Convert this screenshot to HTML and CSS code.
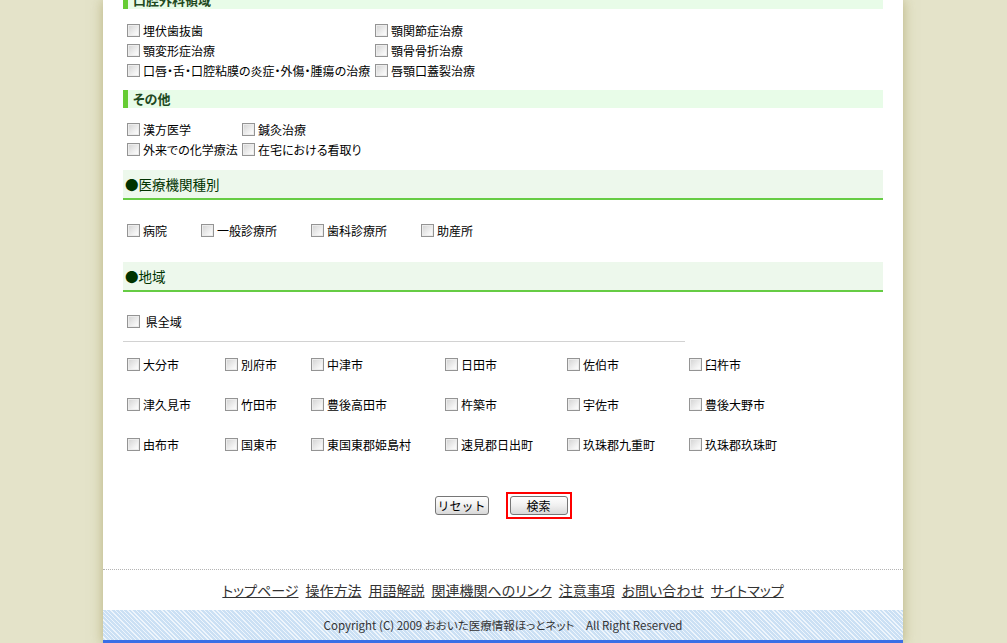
FILE: index.html
```html
<!DOCTYPE html>
<html lang="ja">

<head>
    <meta charset="UTF-8">
    <title>医療機関検索</title>
    <link rel="stylesheet" href="styles.css">
</head>

<body>
    <div class="page">
        <form class="content" id="searchForm">
            <h4 class="sub-title first">口腔外科領域</h4>
            <div class="check-grid oral">
                <label class="check"><input type="checkbox">埋伏歯抜歯</label>
                <label class="check"><input type="checkbox">顎関節症治療</label>
                <label class="check"><input type="checkbox">顎変形症治療</label>
                <label class="check"><input type="checkbox">顎骨骨折治療</label>
                <label class="check"><input type="checkbox">口唇・舌・口腔粘膜の炎症・外傷・腫瘍の治療</label>
                <label class="check"><input type="checkbox">唇顎口蓋裂治療</label>
            </div>

            <h4 class="sub-title other-title">その他</h4>
            <div class="check-grid other">
                <label class="check"><input type="checkbox">漢方医学</label>
                <label class="check"><input type="checkbox">鍼灸治療</label>
                <label class="check"><input type="checkbox">外来での化学療法</label>
                <label class="check"><input type="checkbox">在宅における看取り</label>
            </div>

            <h3 class="section-title">●医療機関種別</h3>
            <div class="check-grid types">
                <label class="check"><input type="checkbox">病院</label>
                <label class="check"><input type="checkbox">一般診療所</label>
                <label class="check"><input type="checkbox">歯科診療所</label>
                <label class="check"><input type="checkbox">助産所</label>
            </div>

            <h3 class="section-title area-title">●地域</h3>
            <div class="all-area">
                <label class="check"><input type="checkbox">&nbsp;県全域</label>
            </div>
            <hr class="area-line">

            <div class="check-grid cities">
                <label class="check"><input type="checkbox">大分市</label>
                <label class="check"><input type="checkbox">別府市</label>
                <label class="check"><input type="checkbox">中津市</label>
                <label class="check"><input type="checkbox">日田市</label>
                <label class="check"><input type="checkbox">佐伯市</label>
                <label class="check"><input type="checkbox">臼杵市</label>

                <label class="check"><input type="checkbox">津久見市</label>
                <label class="check"><input type="checkbox">竹田市</label>
                <label class="check"><input type="checkbox">豊後高田市</label>
                <label class="check"><input type="checkbox">杵築市</label>
                <label class="check"><input type="checkbox">宇佐市</label>
                <label class="check"><input type="checkbox">豊後大野市</label>

                <label class="check"><input type="checkbox">由布市</label>
                <label class="check"><input type="checkbox">国東市</label>
                <label class="check"><input type="checkbox">東国東郡姫島村</label>
                <label class="check"><input type="checkbox">速見郡日出町</label>
                <label class="check"><input type="checkbox">玖珠郡九重町</label>
                <label class="check"><input type="checkbox">玖珠郡玖珠町</label>
            </div>

            <div class="buttons">
                <button type="reset" class="btn btn-reset">リセット</button>
                <span class="search-frame">
                    <button type="submit" class="btn btn-search">検索</button>
                </span>
            </div>
        </form>

        <div class="footer">
            <ul class="footer-links">
                <li><a href="#">トップページ</a></li>
                <li><a href="#">操作方法</a></li>
                <li><a href="#">用語解説</a></li>
                <li><a href="#">関連機関へのリンク</a></li>
                <li><a href="#">注意事項</a></li>
                <li><a href="#">お問い合わせ</a></li>
                <li><a href="#">サイトマップ</a></li>
            </ul>
            <div class="copyright">Copyright (C) 2009 おおいた医療情報ほっとネット　All Right Reserved</div>
        </div>
    </div>
</body>

</html>
```

FILE: styles.css
```css
body {
    margin: 0;
    padding-right: 1px;
    background-color: #e4e3c9;
    font-family: "Noto Sans CJK JP", sans-serif;
    font-size: 12px;
    color: #000;
    font-feature-settings: "palt";
}

.page {
    width: 800px;
    margin: 0 auto;
    background-color: #fff;
    box-shadow: 0 0 12px rgba(150, 140, 70, 0.55);
}

.content {
    display: flow-root;
    padding: 0 20px 50px;
}

/* 小見出し (口腔外科領域 / その他) */
.sub-title {
    height: 18px;
    margin: 10px 0 0;
    padding-left: 5px;
    line-height: 18px;
    border-left: 5px solid #66cc33;
    background-color: #e8fce8;
    color: #1f4a1f;
    font-size: 13px;
    font-weight: bold;
}

.sub-title.first {
    margin-top: -9px;
}

/* 大見出し */
.section-title {
    height: 28px;
    margin: 11px 0 0;
    padding-left: 2px;
    line-height: 28px;
    background-color: #edf8ec;
    border-bottom: 2px solid #66cc44;
    color: #003300;
    font-size: 13.5px;
    font-weight: normal;
}

.section-title.area-title {
    margin-top: 22px;
}

.check-grid {
    display: grid;
    grid-auto-rows: 20px;
    margin-top: 11px;
}

.check-grid.oral {
    grid-template-columns: 248px auto;
}

.check-grid.other {
    grid-template-columns: 115px auto;
}

.check-grid.types {
    grid-template-columns: 74px 110px 110px auto;
    margin-top: 20px;
}

.check-grid.cities {
    grid-template-columns: 98px 86px 134px 122px 122px auto;
    grid-auto-rows: 40px;
    margin-top: 0;
    padding-top: 2px;
}

.check {
    display: flex;
    align-items: center;
    white-space: nowrap;
}

.check input {
    appearance: none;
    box-sizing: border-box;
    width: 13px;
    height: 13px;
    margin: 0 3px 0 4px;
    border: 1px solid #949494;
    background: linear-gradient(135deg, #d2d2d2, #f4f4f4 70%, #fff);
    box-shadow: inset 0 0 0 1px #ececec;
    flex-shrink: 0;
}

.all-area {
    height: 20px;
    margin-top: 19px;
    display: flex;
}

.area-line {
    width: 562px;
    height: 0;
    margin: 10px 0 0;
    border: 0;
    border-top: 1px solid #d2d2d2;
}

.buttons {
    display: flex;
    justify-content: center;
    align-items: center;
    gap: 17px;
    margin-top: 28px;
}

.btn {
    height: 19px;
    padding: 0;
    font-family: inherit;
    font-size: 12px;
    line-height: 17px;
    color: #000;
    border: 1px solid #767676;
    border-radius: 3px;
    background: linear-gradient(#ffffff, #f0f0f0 50%, #d8d8d8);
    cursor: pointer;
}

.btn-reset {
    width: 54px;
}

.btn-search {
    width: 58px;
}

.search-frame {
    display: flex;
    padding: 2px;
    border: 2px solid #ff0000;
}

/* フッター */
.footer {
    border-top: 1px dotted #b4b4b4;
}

.footer-links {
    display: flex;
    justify-content: center;
    align-items: center;
    gap: 7px;
    height: 40px;
    margin: 0;
    padding: 0;
    list-style: none;
}

.footer-links a {
    color: #333;
    font-size: 14px;
}

.copyright {
    height: 30px;
    line-height: 30px;
    text-align: center;
    font-size: 11.5px;
    color: #333;
    background: repeating-linear-gradient(45deg, #cbe0f4 0, #cbe0f4 2px, #eef5fc 2px, #eef5fc 3px);
    border-bottom: 4px solid #3a6fe6;
}
```
